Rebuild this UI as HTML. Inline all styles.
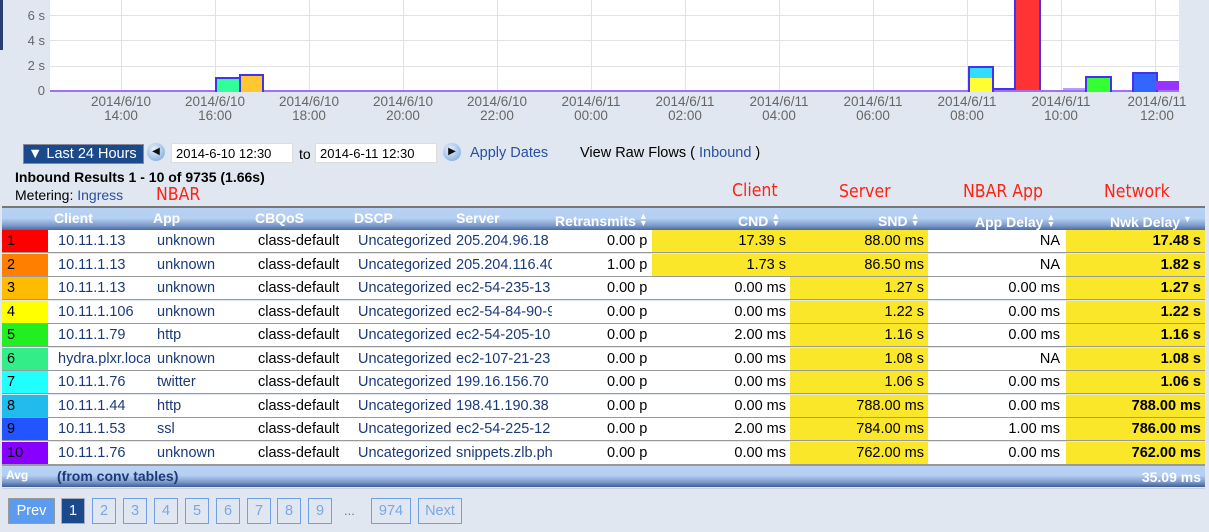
<!DOCTYPE html><html><head><style>
body{margin:0;width:1209px;height:532px;background:#e1e7f0;font-family:"Liberation Sans",Arial,sans-serif;position:relative;overflow:hidden}
.a{position:absolute}
.gl{position:absolute;background:#e2e2e2}
.xl{position:absolute;top:95px;width:90px;text-align:center;font-size:13.5px;color:#666;line-height:14px}
.yl{position:absolute;left:0;width:45px;text-align:right;font-size:13px;color:#666}
.hd{position:absolute;top:206px;left:2px;width:1203px;height:23px;background:linear-gradient(#b8d2f4 0%,#b4cff2 45%,#7f9ccc 75%,#3f5f95 100%);border-top:2px solid #777}
.hd span{position:absolute;top:2px;color:#fff;font-weight:bold;font-size:14px}
.row{position:absolute;left:2px;width:1203px;height:22px;background:#fff;border-bottom:1.5px solid #999;font-size:14.5px;line-height:22px}
.row div{position:absolute;top:0;height:22px;white-space:nowrap;overflow:hidden}
.y{background:#fbe72a}
.b{color:#1b3a78}
.r{text-align:right}
.red{position:absolute;color:#f21;font-size:17.5px;font-family:"DejaVu Sans Condensed","Liberation Sans",sans-serif}
.pg{position:absolute;top:498px;height:24px;border:1px solid #6fa0e8;color:#7aa6e6;font-size:14.5px;line-height:24px;text-align:center}
.arr{font-size:9px;color:#fff;line-height:7px;display:inline-block;vertical-align:top;margin-left:3px;margin-top:0px}
</style></head><body>
<div class="a" style="left:0;top:0;width:3px;height:50px;background:#2a3f70"></div>
<div class="a" style="left:50px;top:0;width:1129px;height:91px;background:#fff"></div>
<div class="gl" style="left:50px;top:15px;width:1129px;height:1px"></div>
<div class="gl" style="left:50px;top:40px;width:1129px;height:1px"></div>
<div class="gl" style="left:50px;top:66px;width:1129px;height:1px"></div>
<div class="gl" style="left:121px;top:0;width:1px;height:91px"></div>
<div class="gl" style="left:215px;top:0;width:1px;height:91px"></div>
<div class="gl" style="left:309px;top:0;width:1px;height:91px"></div>
<div class="gl" style="left:403px;top:0;width:1px;height:91px"></div>
<div class="gl" style="left:497px;top:0;width:1px;height:91px"></div>
<div class="gl" style="left:591px;top:0;width:1px;height:91px"></div>
<div class="gl" style="left:685px;top:0;width:1px;height:91px"></div>
<div class="gl" style="left:779px;top:0;width:1px;height:91px"></div>
<div class="gl" style="left:873px;top:0;width:1px;height:91px"></div>
<div class="gl" style="left:967px;top:0;width:1px;height:91px"></div>
<div class="gl" style="left:1061px;top:0;width:1px;height:91px"></div>
<div class="gl" style="left:1155px;top:0;width:1px;height:91px"></div>
<div class="a" style="left:50px;top:90px;width:1129px;height:2px;background:#a070f0"></div>
<div class="a" style="left:215px;top:77px;width:23px;height:13px;background:#33ff99;border:2px solid #4433ee;border-bottom:0"></div>
<div class="a" style="left:239px;top:74px;width:21px;height:16px;background:#ffc830;border:2px solid #4433ee;border-bottom:0"></div>
<div class="a" style="left:968px;top:66px;width:22px;height:24px;background:#ffff33;border:2px solid #4433ee;border-bottom:0"></div>
<div class="a" style="left:970px;top:68px;width:22px;height:10px;background:#33ddff"></div>
<div class="a" style="left:992px;top:88px;width:23px;height:2px;background:#4433ee"></div>
<div class="a" style="left:1014px;top:0;width:23px;height:90px;background:#ff3333;border:2px solid #4433ee;border-bottom:0;border-top:0"></div>
<div class="a" style="left:1063px;top:88px;width:22px;height:2px;background:#b0a0ff"></div>
<div class="a" style="left:1085px;top:76px;width:23px;height:14px;background:#33ff33;border:2px solid #4433ee;border-bottom:0"></div>
<div class="a" style="left:1132px;top:72px;width:22px;height:18px;background:#3366ff;border:2px solid #4433ee;border-bottom:0"></div>
<div class="a" style="left:1156px;top:81px;width:23px;height:9px;background:#9933ff"></div>
<div class="yl" style="top:8px">6 s</div><div class="yl" style="top:33px">4 s</div><div class="yl" style="top:58px">2 s</div><div class="yl" style="top:83px">0</div>
<div class="xl" style="left:76px">2014/6/10<br>14:00</div>
<div class="xl" style="left:170px">2014/6/10<br>16:00</div>
<div class="xl" style="left:264px">2014/6/10<br>18:00</div>
<div class="xl" style="left:358px">2014/6/10<br>20:00</div>
<div class="xl" style="left:452px">2014/6/10<br>22:00</div>
<div class="xl" style="left:546px">2014/6/11<br>00:00</div>
<div class="xl" style="left:640px">2014/6/11<br>02:00</div>
<div class="xl" style="left:734px">2014/6/11<br>04:00</div>
<div class="xl" style="left:828px">2014/6/11<br>06:00</div>
<div class="xl" style="left:922px">2014/6/11<br>08:00</div>
<div class="xl" style="left:1016px">2014/6/11<br>10:00</div>
<div class="xl" style="left:1112px">2014/6/11<br>12:00</div>
<div class="a" style="left:23px;top:144px;width:115px;height:18px;background:#1a4a8c;border:1px solid #889;color:#fff;font-size:14.5px;line-height:18px;padding-left:4px">▼ Last 24 Hours</div>
<div class="a" style="left:147px;top:143px;width:18px;height:18px;border-radius:50%;background:radial-gradient(circle at 40% 35%,#e8f2ff,#6fa0d8);font-size:10px;line-height:18px;text-align:center;color:#111">◀</div>
<div class="a" style="left:171px;top:143px;width:122px;height:20px;background:#fff;border:1px solid #ddd;font-size:13px;line-height:20px;padding-left:4px;box-sizing:border-box">2014-6-10 12:30</div>
<div class="a" style="left:299px;top:146px;font-size:14px">to</div>
<div class="a" style="left:315px;top:143px;width:122px;height:20px;background:#fff;border:1px solid #ddd;font-size:13px;line-height:20px;padding-left:4px;box-sizing:border-box">2014-6-11 12:30</div>
<div class="a" style="left:443px;top:143px;width:18px;height:18px;border-radius:50%;background:radial-gradient(circle at 40% 35%,#e8f2ff,#6fa0d8);font-size:10px;line-height:18px;text-align:center;color:#111">▶</div>
<div class="a b" style="left:470px;top:145px;font-size:14.5px;color:#2a4fa0">Apply Dates</div>
<div class="a" style="left:580px;top:145px;font-size:14.5px">View Raw Flows ( <span style="color:#2a4fa0">Inbound</span> )</div>
<div class="a" style="left:15px;top:169px;font-size:14px;font-weight:bold">Inbound Results 1 - 10 of 9735 (1.66s)</div>
<div class="a" style="left:15px;top:187px;font-size:14px">Metering: <span style="color:#2a4fa0">Ingress</span></div>
<div class="red" style="left:156px;top:185px">NBAR</div>
<div class="red" style="left:732px;top:181px">Client</div>
<div class="red" style="left:839px;top:182px">Server</div>
<div class="red" style="left:963px;top:182px">NBAR App</div>
<div class="red" style="left:1104px;top:182px">Network</div>
<div class="hd">
<span style="left:52px">Client</span><span style="left:151px">App</span><span style="left:253px">CBQoS</span><span style="left:352px">DSCP</span><span style="left:454px">Server</span>
<span style="left:553px;top:5px">Retransmits<i class="arr">▲<br>▼</i></span>
<span style="left:736px;top:5px">CND<i class="arr">▲<br>▼</i></span>
<span style="left:876px;top:5px">SND<i class="arr">▲<br>▼</i></span>
<span style="left:973px;top:6px">App Delay<i class="arr">▲<br>▼</i></span>
<span style="left:1108px;top:6px">Nwk Delay<i class="arr" style="margin-top:2px">▼</i></span>
</div>
<div id="rows"></div>
<script>
var d=[
["#ff0000","10.11.1.13","unknown","205.204.96.18","0.00 p","17.39 s","88.00 ms","NA","17.48 s",1],
["#ff8000","10.11.1.13","unknown","205.204.116.40","1.00 p","1.73 s","86.50 ms","NA","1.82 s",1],
["#ffbb00","10.11.1.13","unknown","ec2-54-235-13","0.00 p","0.00 ms","1.27 s","0.00 ms","1.27 s",0],
["#ffff00","10.11.1.106","unknown","ec2-54-84-90-9","0.00 p","0.00 ms","1.22 s","0.00 ms","1.22 s",0],
["#22ee22","10.11.1.79","http","ec2-54-205-10","0.00 p","2.00 ms","1.16 s","0.00 ms","1.16 s",0],
["#33ee88","hydra.plxr.local","unknown","ec2-107-21-23","0.00 p","0.00 ms","1.08 s","NA","1.08 s",0],
["#22ffff","10.11.1.76","twitter","199.16.156.70","0.00 p","0.00 ms","1.06 s","0.00 ms","1.06 s",0],
["#22bbee","10.11.1.44","http","198.41.190.38","0.00 p","0.00 ms","788.00 ms","0.00 ms","788.00 ms",0],
["#2255ff","10.11.1.53","ssl","ec2-54-225-12","0.00 p","2.00 ms","784.00 ms","1.00 ms","786.00 ms",0],
["#8800ff","10.11.1.76","unknown","snippets.zlb.ph","0.00 p","0.00 ms","762.00 ms","0.00 ms","762.00 ms",0]];
var h="";
d.forEach(function(r,i){var t=230+i*23.5;
h+='<div class="row" style="top:'+t+'px">'+
'<div style="left:0;width:46px;background:'+r[0]+';padding-left:5px;box-sizing:border-box">'+(i+1)+'</div>'+
'<div class="b" style="left:56px;width:92px">'+r[1]+'</div>'+
'<div class="b" style="left:155px;width:95px">'+r[2]+'</div>'+
'<div style="left:256px">class-default</div>'+
'<div class="b" style="left:356px;width:94px">Uncategorized(</div>'+
'<div class="b" style="left:454px;width:96px">'+r[3]+'</div>'+
'<div style="left:605px">'+r[4]+'</div>'+
'<div class="r'+(r[9]?' y':'')+'" style="left:650px;width:138px;padding-right:4px;box-sizing:border-box">'+r[5]+'</div>'+
'<div class="r y" style="left:788px;width:138px;padding-right:4px;box-sizing:border-box">'+r[6]+'</div>'+
'<div class="r" style="left:926px;width:136px;padding-right:4px;box-sizing:border-box">'+r[7]+'</div>'+
'<div class="r y" style="left:1064px;width:139px;padding-right:4px;box-sizing:border-box;font-weight:bold">'+r[8]+'</div></div>';});
document.getElementById("rows").innerHTML=h;
</script>
<div class="hd" style="top:465px;height:21px;border-top:1px solid #999"><span style="left:4px;font-size:12px">Avg</span><span style="left:55px;color:#1b3a78">(from conv tables)</span><span style="right:4px;top:3px">35.09 ms</span></div>
<div class="a" style="left:2px;top:488px;width:1203px;height:1px;background:#c8d0dc"></div>
<div class="pg" style="left:8px;width:45px;background:#5b9cf0;color:#fff;border-color:#999">Prev</div>
<div class="pg" style="left:61px;width:22px;background:#1b4a8c;color:#fff;border-color:#aab">1</div>
<div class="pg" style="left:92px;width:22px">2</div>
<div class="pg" style="left:123px;width:22px">3</div>
<div class="pg" style="left:154px;width:22px">4</div>
<div class="pg" style="left:185px;width:22px">5</div>
<div class="pg" style="left:216px;width:22px">6</div>
<div class="pg" style="left:247px;width:22px">7</div>
<div class="pg" style="left:277px;width:22px">8</div>
<div class="pg" style="left:308px;width:22px">9</div>
<div class="a" style="left:344px;top:503px;color:#777;font-size:13px">...</div>
<div class="pg" style="left:371px;width:38px">974</div>
<div class="pg" style="left:418px;width:42px">Next</div>
</body></html>
